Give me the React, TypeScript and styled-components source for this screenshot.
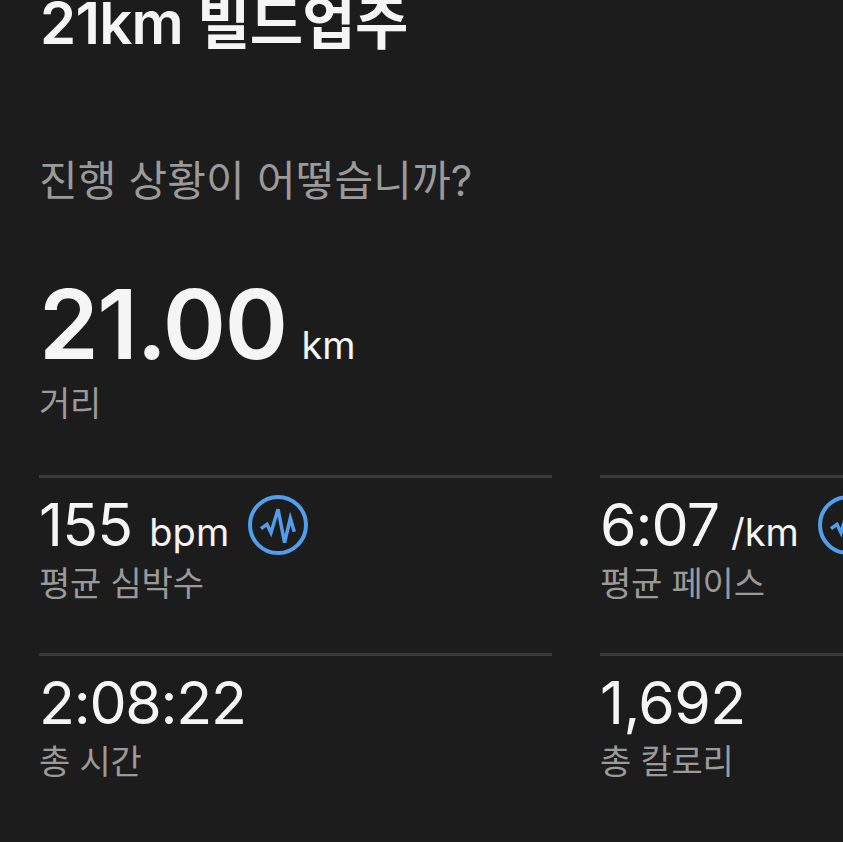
import React from 'react';
import styled, { createGlobalStyle } from 'styled-components';

const GlobalStyle = createGlobalStyle`
  html, body {
    margin: 0;
    padding: 0;
    background: #1c1c1c;
    overflow: hidden;
  }
`;

const Page = styled.div`
  width: 843px;
  height: 842px;
  overflow: hidden;
  box-sizing: border-box;
  padding-left: 39px;
  background: #1c1c1c;
  font-family: Inter, 'Noto Sans CJK KR', sans-serif;
  color: #f5f5f5;
`;

const Title = styled.h1`
  margin: -10px 0 0 1px;
  font-size: 58px;
  line-height: 66px;
  font-weight: 600;
  letter-spacing: -0.7px;
  white-space: nowrap;
`;

const Subtitle = styled.p`
  margin: 97px 0 0 0;
  font-size: 42px;
  line-height: 56px;
  font-weight: 400;
  color: #9a9a9a;
  letter-spacing: 0.15px;
  white-space: nowrap;
`;

const Hero = styled.div`
  display: flex;
  align-items: baseline;
  margin-top: 69px;
  height: 92px;
`;

const HeroValue = styled.span`
  font-size: 96px;
  line-height: 92px;
  font-weight: 600;
  letter-spacing: -1.5px;
`;

const Unit = styled.span<{ $gap: number }>`
  font-size: 38px;
  font-weight: 400;
  margin-left: ${({ $gap }) => $gap}px;
`;

const Label = styled.div`
  font-size: 34px;
  line-height: 44px;
  color: #9a9a9a;
  letter-spacing: -0.2px;
  white-space: nowrap;
`;

const HeroLabel = styled(Label)`
  margin-top: 12px;
`;

const Grid = styled.div`
  display: grid;
  grid-template-columns: 513px 513px;
  column-gap: 48px;
  margin-top: 49px;
`;

const Cell = styled.div`
  border-top: 3px solid #3a3a3a;
  height: 178px;
  box-sizing: border-box;
  padding-top: 17px;
`;

const ValueRow = styled.div`
  display: flex;
  align-items: center;
  height: 60px;
  margin-bottom: 7px;
`;

const Value = styled.span<{ $tracking: number }>`
  font-size: 59px;
  line-height: 60px;
  font-weight: 400;
  letter-spacing: ${({ $tracking }) => $tracking}px;
`;

const ValueGroup = styled.div`
  display: flex;
  align-items: baseline;
  white-space: nowrap;
`;

const StatusIcon = styled.svg`
  flex: none;
  width: 60px;
  height: 60px;
  margin-left: 19px;
  color: #4f9fec;
`;

const PulseIcon = () => (
  <StatusIcon viewBox="0 0 60 60" fill="none" stroke="currentColor">
    <circle cx="30" cy="30" r="28" strokeWidth="4" />
    <path
      d="M13 33.7 19 29.3 23 37.7 30 14.3 36.6 47.7 42.3 23.3 46.3 36.7"
      strokeWidth="3.5"
      strokeLinejoin="miter"
    />
  </StatusIcon>
);

interface Stat {
  value: string;
  tracking: number;
  unit?: string;
  unitGap?: number;
  label: string;
  live?: boolean;
}

const stats: Stat[] = [
  { value: '155', tracking: -0.8, unit: 'bpm', unitGap: 17, label: '평균 심박수', live: true },
  { value: '6:07', tracking: -1, unit: '/km', unitGap: 12, label: '평균 페이스', live: true },
  { value: '2:08:22', tracking: -1.3, label: '총 시간' },
  { value: '1,692', tracking: -0.6, label: '총 칼로리' },
];

export default function App() {
  return (
    <Page>
      <GlobalStyle />
      <Title>21km 빌드업주</Title>
      <Subtitle>진행 상황이 어떻습니까?</Subtitle>
      <Hero>
        <HeroValue>21.00</HeroValue>
        <Unit $gap={15}>km</Unit>
      </Hero>
      <HeroLabel>거리</HeroLabel>
      <Grid>
        {stats.map(stat => (
          <Cell key={stat.label}>
            <ValueRow>
              <ValueGroup>
                <Value $tracking={stat.tracking}>{stat.value}</Value>
                {stat.unit && <Unit $gap={stat.unitGap ?? 0}>{stat.unit}</Unit>}
              </ValueGroup>
              {stat.live && <PulseIcon />}
            </ValueRow>
            <Label>{stat.label}</Label>
          </Cell>
        ))}
      </Grid>
    </Page>
  );
}
